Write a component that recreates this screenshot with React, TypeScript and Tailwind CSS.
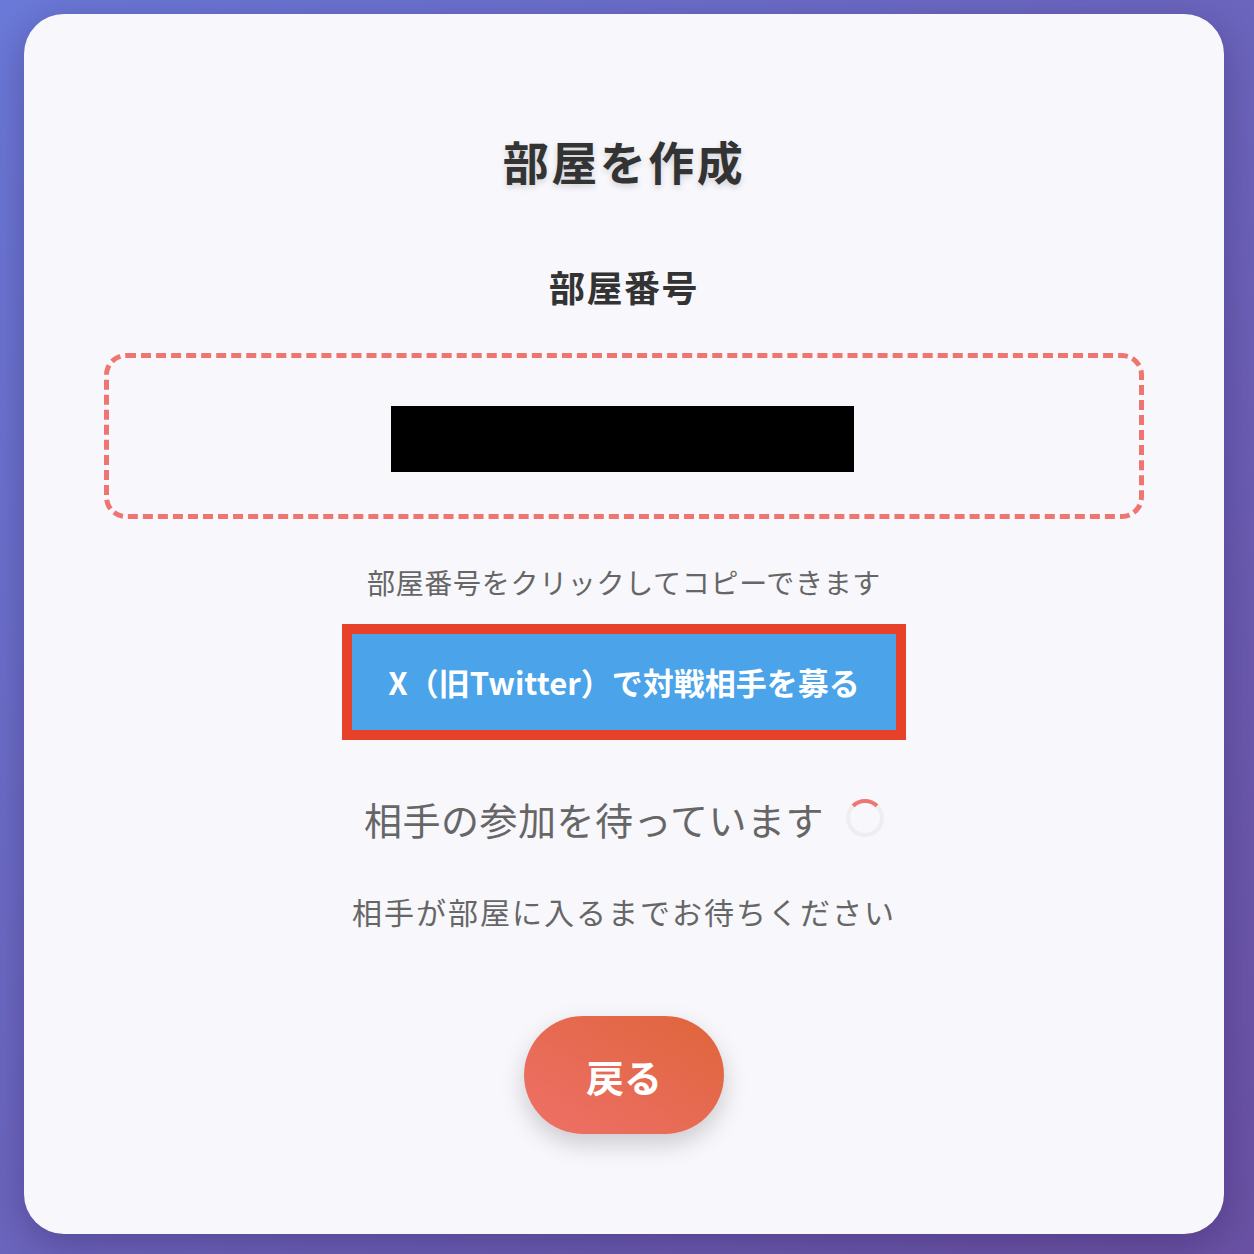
import { useState } from "react";

const jp = "font-['Noto_Sans_CJK_JP','Noto_Sans',sans-serif]";

function Spinner() {
    return (
        <span className="inline-block w-[38px] h-[38px] rounded-full border-[4px] border-[#eeeeee] border-t-[#ef7570] animate-spin" />
    );
}

export default function App() {
    const [copied, setCopied] = useState(false);

    return (
        <div className={`w-[1254px] h-[1254px] bg-linear-135 from-[#6b7ad9] to-[#6a51a3] pt-[14px] px-[24px] ${jp}`}>
            <div className="w-[1200px] h-[1220px] bg-[#f7f7fc] rounded-[40px] shadow-[0_10px_40px_rgba(40,20,80,0.35)] flex flex-col items-center pt-[118px]">
                <h1 className="h-[56px] flex items-center text-[46px] font-bold text-[#333] tracking-[2.5px] [text-shadow:0_3px_6px_rgba(0,0,0,0.15)]">
                    部屋を作成
                </h1>

                <h2 className="mt-[76px] h-[44px] flex items-center text-[36px] font-bold text-[#333] tracking-[1.5px]">部屋番号</h2>

                <button
                    onClick={() => setCopied(true)}
                    className="mt-[45px] w-[1040px] h-[166px] border-[5px] border-dashed border-[#ef7570] rounded-[22px] flex items-center justify-center pt-[6px] pr-[4px]"
                >
                    <span className="block w-[463px] h-[66px] bg-black" />
                </button>

                <p className="mt-[43px] h-[40px] flex items-center text-[28px] text-[#666] tracking-[0.7px]">
                    {copied ? "コピーしました" : "部屋番号をクリックしてコピーできます"}
                </p>

                <div className="mt-[22px] border-[10px] border-[#e8412a] w-[564px] h-[116px]">
                    <button className="w-full h-full bg-[#4ba3e9] text-white text-[31px] font-bold flex items-center justify-center">
                        X（旧Twitter）で対戦相手を募る
                    </button>
                </div>

                <div className="mt-[52px] h-[52px] flex items-center gap-[22px]">
                    <span className="text-[38px] text-[#666] tracking-[0.5px]">相手の参加を待っています</span>
                    <Spinner />
                </div>

                <p className="mt-[46px] h-[42px] flex items-center text-[30px] text-[#666] tracking-[2px]">
                    相手が部屋に入るまでお待ちください
                </p>

                <button className="mt-[84px] w-[200px] h-[118px] rounded-full bg-linear-to-tr from-[#ee7068] to-[#df6539] text-white text-[38px] font-bold shadow-[0_10px_25px_rgba(0,0,0,0.18)]">
                    戻る
                </button>
            </div>
        </div>
    );
}
